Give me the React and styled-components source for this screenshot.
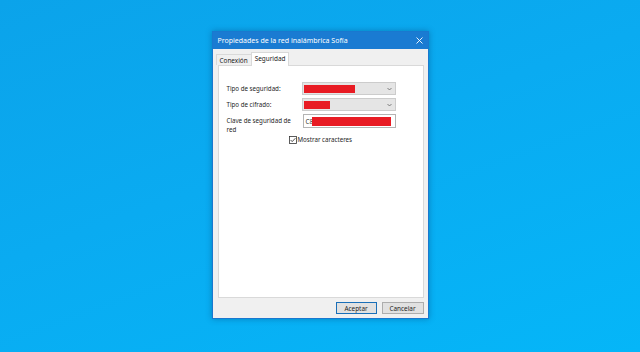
import React from "react";
import styled, { createGlobalStyle } from "styled-components";

const Global = createGlobalStyle`
  html, body { margin: 0; padding: 0; }
  body {
    font-family: "Noto Sans", "Liberation Sans", sans-serif;
    background: #0aa6ee;
  }
`;

const Desktop = styled.div`
  width: 640px;
  height: 352px;
  display: flex;
  align-items: flex-start;
  justify-content: center;
  padding-top: 31px;
  box-sizing: border-box;
  background: linear-gradient(160deg, #0ba3ea 0%, #0aabf1 45%, #05b6f8 100%);
  overflow: hidden;
`;

const Dialog = styled.div`
  width: 217px;
  height: 288px;
  display: flex;
  flex-direction: column;
  background: #f0f0f0;
  box-shadow: 0 0 6px rgba(0, 40, 90, 0.35);
  border: 1px solid #1a78cf;
  box-sizing: border-box;
`;

const TitleBar = styled.div`
  height: 17px;
  flex: none;
  background: #1a7bd2;
  display: flex;
  align-items: center;
  justify-content: space-between;
  padding: 0 5px 0 5px;
  color: #ffffff;
  font-size: 7px;
`;

const Close = styled.svg`
  width: 7px;
  height: 7px;
`;

const Body = styled.div`
  flex: 1;
  display: flex;
  flex-direction: column;
  padding: 4px 4px 0 5px;
`;

const Tabs = styled.div`
  display: flex;
  align-items: flex-end;
  height: 12px;
  margin-left: -2px;
`;

const Tab = styled.div`
  font-size: 6.4px;
  color: #202020;
  padding: 0 3px;
  height: ${(p) => (p.$active ? "14px" : "11px")};
  line-height: ${(p) => (p.$active ? "12px" : "11px")};
  background: ${(p) => (p.$active ? "#ffffff" : "#f0f0f0")};
  border: 1px solid #d9d9d9;
  border-bottom: none;
  box-sizing: border-box;
  margin-right: -1px;
  position: relative;
  z-index: ${(p) => (p.$active ? 1 : 0)};
  margin-bottom: ${(p) => (p.$active ? "-1px" : "0")};
`;

const Panel = styled.div`
  height: 233px;
  background: #ffffff;
  border: 1px solid #d9d9d9;
  box-sizing: border-box;
  padding: 16px 0 0 8px;
  display: grid;
  grid-template-columns: 75px 94px;
  grid-auto-rows: min-content;
  row-gap: 3px;
  align-content: start;
`;

const Label = styled.div`
  font-size: 6.2px;
  color: #1e1e1e;
  line-height: 9px;
  align-self: ${(p) => (p.$top ? "start" : "center")};
  padding-top: ${(p) => (p.$top ? "2px" : "0")};
`;

const Combo = styled.div`
  height: 13px;
  background: #e5e5e5;
  border: 1px solid #cccccc;
  box-sizing: border-box;
  display: flex;
  align-items: center;
  padding: 0 3px 0 1px;
`;

const Redact = styled.div`
  height: ${(p) => p.$h || 8}px;
  background: #e81b23;
`;

const Spacer = styled.div`
  flex: 1;
`;

const Chevron = styled.svg`
  width: 5px;
  height: 4px;
`;

const Input = styled.div`
  height: 14px;
  margin-left: 1px;
  background: #ffffff;
  border: 1px solid #b4b4b4;
  box-sizing: border-box;
  display: flex;
  align-items: center;
  padding: 0 4px 0 2px;
  font-size: 6.2px;
  color: #333;
`;

const CheckRow = styled.div`
  grid-column: 2;
  margin-left: -13px;
  display: flex;
  align-items: center;
  gap: 1px;
  font-size: 6.2px;
  color: #1e1e1e;
  margin-top: -2px;
`;

const Box = styled.svg`
  width: 8px;
  height: 8px;
`;

const Buttons = styled.div`
  flex: 1;
  display: flex;
  justify-content: flex-end;
  align-items: center;
  gap: 5px;
`;

const Button = styled.div`
  width: ${(p) => (p.$primary ? "41px" : "42px")};
  height: 12px;
  box-sizing: border-box;
  background: #e1e1e1;
  border: 1px solid ${(p) => (p.$primary ? "#1a6fb8" : "#adadad")};
  display: flex;
  align-items: center;
  justify-content: center;
  font-size: 6.4px;
  color: #1e1e1e;
`;

const ChevronIcon = () => (
  <Chevron viewBox="0 0 5 4">
    <path d="M0.5 1 L2.5 3 L4.5 1" fill="none" stroke="#555" strokeWidth="0.7" />
  </Chevron>
);

export default function App() {
  return (
    <>
      <Global />
      <Desktop>
        <Dialog>
          <TitleBar>
            <span>Propiedades de la red inalámbrica Sofía</span>
            <Close viewBox="0 0 7 7">
              <path d="M0.5 0.5 L6.5 6.5 M6.5 0.5 L0.5 6.5" stroke="#fff" strokeWidth="0.9" />
            </Close>
          </TitleBar>
          <Body>
            <Tabs>
              <Tab>Conexión</Tab>
              <Tab $active>Seguridad</Tab>
            </Tabs>
            <Panel>
              <Label>Tipo de seguridad:</Label>
              <Combo>
                <Redact style={{ width: 51 }} />
                <Spacer />
                <ChevronIcon />
              </Combo>
              <Label>Tipo de cifrado:</Label>
              <Combo>
                <Redact style={{ width: 26 }} />
                <Spacer />
                <ChevronIcon />
              </Combo>
              <Label $top>Clave de seguridad de red</Label>
              <Input>
                <span>C8</span>
                <Redact $h={9} style={{ flex: 1, marginLeft: -1 }} />
              </Input>
              <CheckRow>
                <Box viewBox="0 0 8 8">
                  <rect x="0.5" y="0.5" width="7" height="7" fill="#fff" stroke="#333" strokeWidth="0.8" />
                  <path d="M1.6 4 L3.2 5.6 L6.4 2.2" fill="none" stroke="#222" strokeWidth="0.8" />
                </Box>
                <span>Mostrar caracteres</span>
              </CheckRow>
            </Panel>
            <Buttons>
              <Button $primary>Aceptar</Button>
              <Button>Cancelar</Button>
            </Buttons>
          </Body>
        </Dialog>
      </Desktop>
    </>
  );
}
